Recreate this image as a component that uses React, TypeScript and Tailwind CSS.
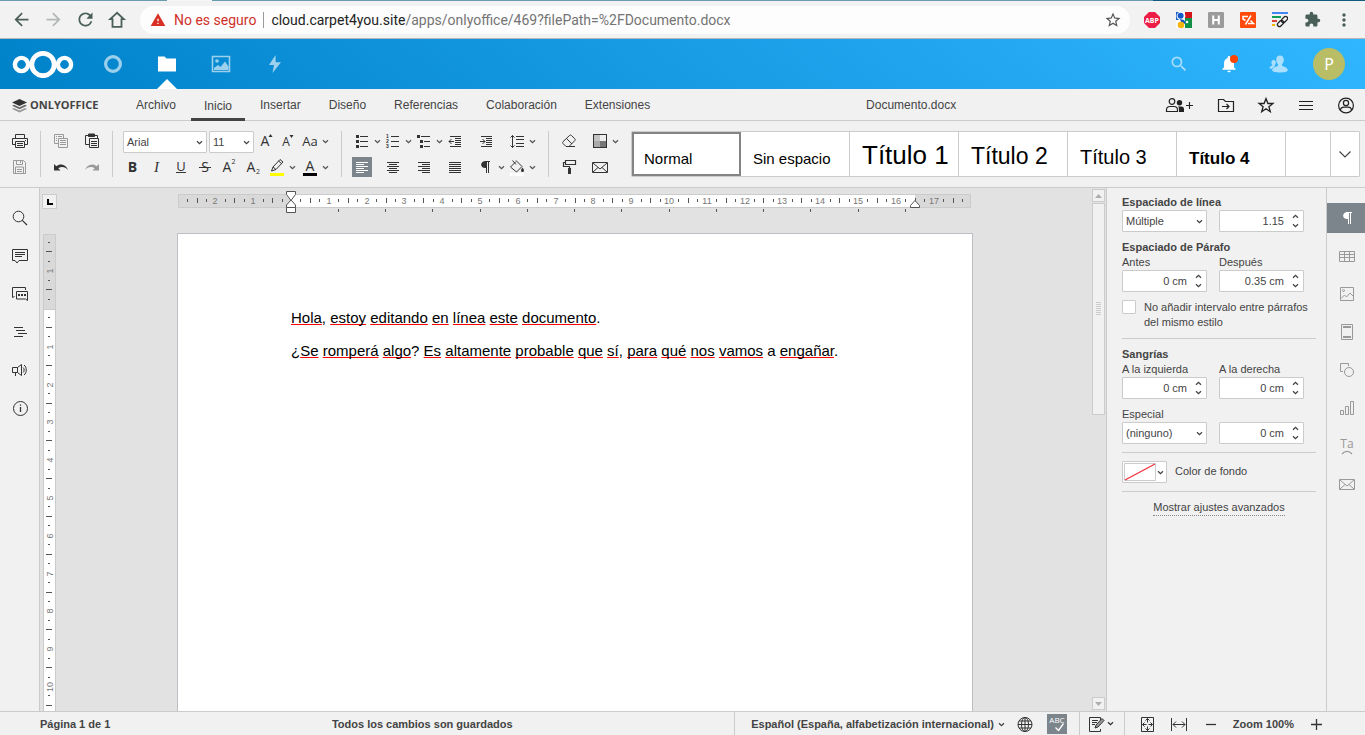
import { ComponentProps, FC, ReactNode, useState } from 'react';
import {
    MdArrowBack,
    MdArrowForward,
    MdExtension,
    MdMoreVert,
    MdNotifications,
    MdRefresh,
    MdSearch,
    MdStarBorder,
    MdWarning,
} from 'react-icons/md';
import { twJoin, twMerge } from 'tailwind-merge';

const CM = 37.8;

type IconProps = { children: ReactNode; size?: number; className?: string };

const Icon: FC<IconProps> = ({ children, size = 20, className }) => (
    <svg
        aria-hidden="true"
        className={twMerge('shrink-0', className)}
        fill="none"
        height={size}
        stroke="currentColor"
        viewBox={`0 0 ${size} ${size}`}
        width={size}
    >
        {children}
    </svg>
);

type GlyphProps = { x: number; y: number; size: number; children: string; bold?: boolean; italic?: boolean };

const Glyph: FC<GlyphProps> = ({ x, y, size, children, bold, italic }) => (
    <text
        fill="currentColor"
        fontFamily={italic ? 'Liberation Serif, serif' : 'Open Sans, sans-serif'}
        fontSize={size}
        fontStyle={italic ? 'italic' : 'normal'}
        fontWeight={bold ? 700 : 400}
        stroke="none"
        textAnchor="middle"
        x={x}
        y={y}
    >
        {children}
    </text>
);

const Caret: FC<{ className?: string }> = ({ className }) => (
    <svg
        aria-hidden="true"
        className={twMerge('h-[7px] w-[7px] shrink-0', className)}
        fill="none"
        stroke="currentColor"
        strokeWidth="1.3"
        viewBox="0 0 7 7"
    >
        <path d="M1 2.2l2.5 2.5L6 2.2" />
    </svg>
);

type ToolButtonProps = ComponentProps<'button'> & { label: string; caret?: boolean; active?: boolean };

const ToolButton: FC<ToolButtonProps> = ({ label, caret, active, className, children, ...props }) => (
    <button
        aria-label={label}
        type="button"
        className={twMerge(
            'flex h-5 shrink-0 items-center text-[#333]',
            caret ? 'w-[31px] gap-0.5' : 'w-5',
            active && 'bg-[#7d858c] text-white',
            className,
        )}
        {...props}
    >
        {children}
        {caret && <Caret className="text-[#555]" />}
    </button>
);

const Divider = () => <div className="h-[46px] w-px shrink-0 bg-[#cbcbcb]" />;

/* Browser chrome */

const BrowserBar = () => (
    <header className="shrink-0 font-[Roboto,sans-serif]">
        <div className="flex h-px bg-[#6a9bb0]">
            <div className="ml-[167px] w-[45px] bg-[#f6f6f6]" />
            <div className="ml-auto w-[212px] bg-[#125c7e]" />
        </div>
        <div className="flex h-[38px] items-center border-b border-[#b6b6b6] bg-[#f2f2f2] px-[5px] text-[#4a5f58]">
            <button aria-label="Atrás" className="flex w-8 justify-center" type="button">
                <MdArrowBack size={21} />
            </button>
            <button aria-label="Adelante" className="flex w-8 justify-center text-[#b1b8b5]" type="button">
                <MdArrowForward size={21} />
            </button>
            <button aria-label="Recargar" className="flex w-8 justify-center" type="button">
                <MdRefresh size={21} />
            </button>
            <button aria-label="Inicio" className="flex w-8 justify-center" type="button">
                <Icon>
                    <path d="M10 2.8L3.2 9.2H5.500v7.600h9V9.200h2.300z" strokeWidth="1.800" />
                </Icon>
            </button>
            <div className="mr-1.5 ml-[7px] flex h-7 flex-1 items-center rounded-full bg-[#fdfdfd] pr-2 pl-2.5 text-sm">
                <MdWarning className="mr-2 text-[#d93025]" size={16} />
                <span className="text-[#d0302a]">No es seguro</span>
                <span className="mx-[7px] h-4 w-px bg-[#9a9a9a]" />
                <div aria-label="Dirección" className="flex-1 truncate text-[#747474]" role="textbox" tabIndex={0}>
                    <span className="text-[#222]">cloud.carpet4you.site</span>
                    /apps/onlyoffice/469?filePath=%2FDocumento.docx
                </div>
                <button aria-label="Añadir a marcadores" className="text-[#555]" type="button">
                    <MdStarBorder size={18} />
                </button>
            </div>
            <ExtensionButton label="Bloqueador">
                <path d="M5 0h6l5 5v6l-5 5H5l-5-5V5z" fill="#ed1e45" stroke="none" />
                <g className="text-white">
                    <Glyph bold size={7} x={8} y={11}>
                        ABP
                    </Glyph>
                </g>
            </ExtensionButton>
            <ExtensionButton label="Buscador">
                <g stroke="none">
                    <path d="M0 0h16v16H0z" fill="#fff" />
                    <path d="M9 0h7v6H9z" fill="#d5151b" />
                    <path d="M9 6h7v10H9z" fill="#109246" />
                    <path d="M0 0h3v8H0z" fill="#1c5fc9" />
                    <circle cx="5" cy="4" fill="#fff" r="4.400" />
                    <circle cx="4.600" cy="3.800" fill="#1558c7" r="3" />
                    <path d="M4 7l4 1 2 3-2 1-3-2z" fill="#1558c7" />
                    <circle cx="5" cy="13" fill="#f5b50a" r="3.300" />
                    <circle cx="11" cy="10" fill="#fff" r="1.300" />
                </g>
            </ExtensionButton>
            <ExtensionButton label="Anotaciones">
                <rect fill="#9b9b9b" height="16" rx="1" stroke="none" width="16" />
                <path d="M5.200 3.500v9M10.800 3.500v9M5 8h6" stroke="#fff" strokeWidth="2" />
            </ExtensionButton>
            <ExtensionButton label="Etiquetas">
                <rect fill="#ff4a0c" height="16" rx="1" stroke="none" width="16" />
                <path d="M11 3.500L5.500 12.500M8 4.500H3v2.500l2.500 1.500M8 11.500h5.500L10.500 8.500" stroke="#fff" strokeWidth="1.500" />
            </ExtensionButton>
            <ExtensionButton label="Enlaces">
                <path d="M0 1h16" stroke="#4285f4" strokeWidth="2" />
                <path d="M0 5h9" stroke="#0f9d58" strokeWidth="2" />
                <path d="M0 9h5" stroke="#db4437" strokeWidth="2" />
                <path d="M0 13h3" stroke="#f4b400" strokeWidth="2" />
                <g stroke="#222" strokeWidth="1.300">
                    <rect height="4" rx="2" transform="rotate(-45 12.500 7.500)" width="7" x="9" y="5.500" />
                    <rect height="4" rx="2" transform="rotate(-45 8.500 11.500)" width="7" x="5" y="9.500" />
                </g>
            </ExtensionButton>
            <button aria-label="Extensiones" className="flex w-8 justify-center" type="button">
                <MdExtension size={17} />
            </button>
            <button aria-label="Menú" className="flex w-8 justify-center" type="button">
                <MdMoreVert size={20} />
            </button>
        </div>
    </header>
);

const ExtensionButton: FC<{ label: string; children: ReactNode }> = ({ label, children }) => (
    <button aria-label={label} className="flex w-8 justify-center" type="button">
        <Icon size={16}>{children}</Icon>
    </button>
);

/* Nextcloud header */

const CloudHeader = () => (
    <header className="flex h-[50px] shrink-0 items-center bg-[linear-gradient(40deg,#0082c9_0%,#30b6ff_100%)] pr-[11px] pl-3 text-white">
        <svg aria-label="Nextcloud" className="mr-3 h-7 w-[62px]" fill="none" role="img" stroke="#fff" viewBox="0 0 62 28">
            <circle cx="31" cy="14.500" r="11.200" strokeWidth="4.800" />
            <circle cx="9.500" cy="14.500" r="6.600" strokeWidth="4.400" />
            <circle cx="52.500" cy="14.500" r="6.600" strokeWidth="4.400" />
        </svg>
        <nav className="flex h-full">
            <a aria-label="Panel" className="flex w-[54px] items-center justify-center opacity-60" href="#panel">
                <Icon>
                    <circle cx="10" cy="10" r="7.400" strokeWidth="3.200" />
                </Icon>
            </a>
            <a aria-label="Archivos" className="relative flex w-[54px] items-center justify-center" href="#archivos">
                <Icon>
                    <path d="M1 2.500h6.500l2 2h9.500v13H1z" fill="currentColor" stroke="none" />
                </Icon>
                <svg aria-hidden="true" className="absolute bottom-0 h-2.5 w-5" viewBox="0 0 20 10">
                    <path d="M0 10L10 0l10 10z" fill="#fff" />
                </svg>
            </a>
            <a aria-label="Fotos" className="flex w-[54px] items-center justify-center opacity-60" href="#fotos">
                <Icon>
                    <path d="M1.500 2.500h17v15h-17z" strokeWidth="1.600" />
                    <circle cx="6" cy="7" fill="currentColor" r="1.800" stroke="none" />
                    <path d="M3 16v-2l4-3 2.500 2L14 7.500l3.500 5V16z" fill="currentColor" stroke="none" />
                </Icon>
            </a>
            <a aria-label="Actividad" className="flex w-[54px] items-center justify-center opacity-60" href="#actividad">
                <Icon>
                    <path d="M10.500 1L4 11h5L7.500 19 16 8.200h-5.300z" fill="currentColor" stroke="none" />
                </Icon>
            </a>
        </nav>
        <div className="ml-auto flex">
            <button aria-label="Buscar" className="flex w-[50px] items-center justify-center opacity-60" type="button">
                <MdSearch size={20} />
            </button>
            <button aria-label="Notificaciones" className="flex w-[50px] items-center justify-center" type="button">
                <span className="relative">
                    <MdNotifications size={20} />
                    <span className="absolute top-px right-px size-2 rounded-full bg-[#ff4402]" />
                </span>
            </button>
            <button aria-label="Contactos" className="flex w-[50px] items-center justify-center opacity-60" type="button">
                <Icon>
                    <g fill="currentColor" stroke="none">
                        <path d="M11 1.500c2.300 0 3.800 1.600 3.800 4.200 0 2-.8 3.600-1.800 4.400v1.600c1.500 1 5.800 1.600 5.800 4.600 0 1.500-3.600 2.200-7.800 2.200s-7.800-.7-7.800-2.200c0-3 4.300-3.600 5.800-4.600v-1.600c-1-.8-1.800-2.400-1.800-4.400 0-2.600 1.500-4.200 3.800-4.200z" />
                        <path d="M4.600 6c1.400 0 2.200 1 2.200 2.600 0 1.300-.5 2-1 2.600v1l-3 2.600H.8c-.6-2 1.200-2.600 2.600-3.500v-.6c-.6-.5-1-1.200-1-2.300C2.400 7 3.200 6 4.600 6z" />
                    </g>
                </Icon>
            </button>
            <button aria-label="Cuenta" className="flex w-[50px] items-center justify-center" type="button">
                <span className="flex size-8 items-center justify-center rounded-full bg-[#b8bd66] font-['Noto_Sans',sans-serif] text-base">
                    P
                </span>
            </button>
        </div>
    </header>
);

/* Menu tabs */

const TABS = ['Archivo', 'Inicio', 'Insertar', 'Diseño', 'Referencias', 'Colaboración', 'Extensiones'];

const MenuTabs = () => {
    const [activeTab, setActiveTab] = useState('Inicio');

    return (
        <div className="flex h-8 shrink-0 items-stretch border-b border-[#cbcbcb] text-xs text-[#444]">
            <div className="flex w-[123px] items-center pt-0.5 pl-3 font-['Open_Sans',sans-serif] text-[11px] font-bold">
                <svg aria-hidden="true" className="mr-[3px] h-4 w-[15px]" viewBox="0 0 15 16">
                    <path d="M0 11l2-1 5.500 2.500L13 10l2 1-7.500 3.500z" fill="#999" />
                    <path d="M0 7.800l2-1 5.500 2.500L13 6.800l2 1-7.500 3.500z" fill="#6a6a6a" />
                    <path d="M0 4.500L7.500 1 15 4.500 7.500 8z" fill="#333" />
                </svg>
                ONLYOFFICE
            </div>
            <nav className="flex gap-0.5">
                {TABS.map((tab) => (
                    <button
                        key={tab}
                        type="button"
                        className={twJoin(
                            'border-b-3 px-[13px] pt-[5px]',
                            tab === activeTab ? '-mb-px border-[#444]' : 'border-transparent pb-px',
                        )}
                        onClick={() => setActiveTab(tab)}
                    >
                        {tab}
                    </button>
                ))}
            </nav>
            <h1 className="flex flex-1 items-center justify-center pt-px pl-1.5">Documento.docx</h1>
            <div className="flex text-[#222]">
                <button aria-label="Compartir" className="flex w-[52px] items-center justify-center" type="button">
                    <svg aria-hidden="true" className="h-4 w-7" fill="none" stroke="currentColor" viewBox="0 0 28 16">
                        <circle cx="7" cy="4.500" r="2.800" strokeWidth="1.200" />
                        <path d="M1.500 14.500v-1.800c0-2 1.500-3.200 3.500-3.200h4c2 0 3.500 1.200 3.500 3.200v1.800z" strokeWidth="1.200" />
                        <circle cx="14.500" cy="5.700" fill="currentColor" r="2.700" stroke="none" />
                        <path d="M13 9.500h3.500c1.500 0 2.500 1 2.500 2.500v3h-5v-2.500c0-1.200-.4-2.200-1-3z" fill="currentColor" stroke="none" />
                        <path d="M24.500 5v7M21 8.500h7" strokeWidth="1.100" />
                    </svg>
                </button>
                <button aria-label="Abrir ubicación" className="flex w-10 items-center justify-center" type="button">
                    <Icon>
                        <path d="M3.500 4.500h5l2 2h8v10h-15zM7 11.500h7M11.500 9l2.500 2.500-2.500 2.500" strokeWidth="1.200" />
                    </Icon>
                </button>
                <button aria-label="Marcar como favorito" className="flex w-10 items-center justify-center" type="button">
                    <Icon>
                        <path d="M11 3.500l1.900 5h5l-4 3.200 1.400 5-4.300-3-4.300 3 1.400-5-4-3.200h5z" strokeWidth="1.300" />
                    </Icon>
                </button>
                <button aria-label="Ajustes de visualización" className="flex w-10 items-center justify-center" type="button">
                    <Icon>
                        <path d="M4 6.500h14M4 10.500h14M4 14.500h14" strokeWidth="1.200" />
                    </Icon>
                </button>
                <button aria-label="Usuario" className="flex w-10 items-center justify-center" type="button">
                    <Icon>
                        <circle cx="11" cy="10.500" r="7.400" strokeWidth="1.200" />
                        <circle cx="11" cy="8" r="2.600" strokeWidth="1.200" />
                        <path d="M5.500 15.500c0-2 1.500-3.300 3.500-3.300h4c2 0 3.500 1.300 3.500 3.300" strokeWidth="1.200" />
                    </Icon>
                </button>
            </div>
        </div>
    );
};

/* Toolbar */

type SelectBoxProps = { label: string; options: string[]; className?: string };

const SelectBox: FC<SelectBoxProps> = ({ label, options, className }) => (
    <div className={twMerge('relative h-[22px] shrink-0 text-[11px] text-[#444]', className)}>
        <select
            aria-label={label}
            className="size-full appearance-none rounded-[1px] border border-[#cbcbcb] bg-white pl-[3px]"
            defaultValue={options[0]}
        >
            {options.map((option) => (
                <option key={option}>{option}</option>
            ))}
        </select>
        <Caret className="pointer-events-none absolute top-2 right-1" />
    </div>
);

const HistoryTools = () => (
    <>
        <div className="flex w-5 flex-col gap-1.5">
            <ToolButton label="Imprimir">
                <Icon>
                    <path d="M5.500 7V3.500h9V7M5 13.500H2.500v-6h15v6H15M5.500 10.500h9v6h-9zM7 12.500h6M7 14.500h6M15 9.500h1" />
                </Icon>
            </ToolButton>
            <ToolButton className="text-[#999]" label="Guardar">
                <Icon>
                    <path d="M3.500 3.500h10l2 2v11h-12zM6.500 3.500v4h6v-4M10.500 4v2M5.500 16v-6h8v6M7 12.500h5M7 14.500h5" />
                </Icon>
            </ToolButton>
        </div>
        <Divider />
        <div className="grid grid-cols-2 gap-x-[11px] gap-y-1.5">
            <ToolButton className="text-[#999]" label="Copiar">
                <Icon>
                    <path d="M7 12.500H3.500v-9h9V7M5 5.500h1M7 5.500h4M5 7.500h1M5 9.500h1M7.500 7.500h9v9h-9zM9 9.500h6M9 11.500h6M9 13.500h6" />
                </Icon>
            </ToolButton>
            <ToolButton label="Pegar">
                <Icon>
                    <path d="M7 13.500H3.500v-9h12V7M7.500 7.500h9v9h-9zM9 10.500h6M9 12.500h6M9 14.500h6" />
                    <path d="M6.500 3h6v2.500h-6z" fill="currentColor" />
                </Icon>
            </ToolButton>
            <ToolButton label="Deshacer">
                <Icon>
                    <path d="M3 7v6.500h6.500L7.300 11.200c3-2.200 7.200-1.500 9.700 1.800C15.300 7.800 9.500 5.700 5.300 9.200z" fill="currentColor" stroke="none" />
                </Icon>
            </ToolButton>
            <ToolButton className="text-[#999]" label="Rehacer">
                <Icon>
                    <path d="M17 7v6.500h-6.500l2.200-2.300c-3-2.200-7.200-1.500-9.700 1.800C4.700 7.800 10.500 5.700 14.700 9.200z" fill="currentColor" stroke="none" />
                </Icon>
            </ToolButton>
        </div>
    </>
);

const FontTools = () => (
    <div className="flex w-[208px] shrink-0 flex-col gap-1">
        <div className="flex h-[22px] items-start">
            <SelectBox className="w-[84px]" label="Fuente" options={['Arial', 'Calibri', 'Courier New']} />
            <SelectBox className="ml-0.5 w-[45px]" label="Tamaño de fuente" options={['11', '12', '14']} />
            <ToolButton className="ml-0.5" label="Aumentar tamaño">
                <Icon>
                    <Glyph size={14} x={9} y={15}>
                        A
                    </Glyph>
                    <path d="M12.500 6h4l-2-3z" fill="currentColor" stroke="none" />
                </Icon>
            </ToolButton>
            <ToolButton className="ml-0.5" label="Reducir tamaño">
                <Icon>
                    <Glyph size={12} x={8} y={15}>
                        A
                    </Glyph>
                    <path d="M11.500 4h4l-2 3z" fill="currentColor" stroke="none" />
                </Icon>
            </ToolButton>
            <ToolButton caret className="ml-0.5" label="Cambiar mayúsculas">
                <Icon>
                    <Glyph size={13} x={10} y={15}>
                        Aa
                    </Glyph>
                </Icon>
            </ToolButton>
        </div>
        <div className="flex gap-1">
            <ToolButton label="Negrita">
                <Icon>
                    <Glyph bold size={14} x={9.5} y={15}>
                        B
                    </Glyph>
                </Icon>
            </ToolButton>
            <ToolButton label="Cursiva">
                <Icon>
                    <Glyph italic size={15} x={9.5} y={15}>
                        I
                    </Glyph>
                </Icon>
            </ToolButton>
            <ToolButton label="Subrayado">
                <Icon>
                    <Glyph size={13} x={10} y={14}>
                        U
                    </Glyph>
                    <path d="M5 15.500h10" />
                </Icon>
            </ToolButton>
            <ToolButton label="Tachado">
                <Icon>
                    <Glyph size={14} x={10} y={15}>
                        S
                    </Glyph>
                    <path d="M4 10.500h12" />
                </Icon>
            </ToolButton>
            <ToolButton label="Superíndice">
                <Icon>
                    <Glyph size={14} x={8} y={15}>
                        A
                    </Glyph>
                    <Glyph size={7} x={14.5} y={7}>
                        2
                    </Glyph>
                </Icon>
            </ToolButton>
            <ToolButton label="Subíndice">
                <Icon>
                    <Glyph size={14} x={8} y={15}>
                        A
                    </Glyph>
                    <Glyph size={7} x={15} y={17}>
                        2
                    </Glyph>
                </Icon>
            </ToolButton>
            <ToolButton caret label="Color de resaltado">
                <Icon>
                    <path d="M3 16h14v3H3z" fill="#ffff00" stroke="none" />
                    <path d="M4.500 14l1.500-4L13 2.500l3 2.500-7 7.500zM6 10l3 2.500M11.500 4l3 2.500" />
                </Icon>
            </ToolButton>
            <ToolButton caret className="-ml-0.5" label="Color de fuente">
                <Icon>
                    <Glyph size={14} x={10} y={14}>
                        A
                    </Glyph>
                    <path d="M3 16h14v3H3z" fill="#000" stroke="none" />
                </Icon>
            </ToolButton>
        </div>
    </div>
);

const ParagraphTools = () => {
    const [align, setAlign] = useState('left');

    return (
        <div className="grid shrink-0 grid-cols-[repeat(6,31px)] content-start gap-y-1.5">
            <ToolButton caret label="Viñetas">
                <Icon>
                    <path d="M8 5.500h8M8 10.500h8M8 15.500h8" />
                    <path d="M4 4h3v3H4zM4 9h3v3H4zM4 14h3v3H4z" fill="currentColor" stroke="none" />
                </Icon>
            </ToolButton>
            <ToolButton caret label="Numeración">
                <Icon>
                    <path d="M8 5.500h8M8 10.500h8M8 15.500h8" />
                    <g fill="currentColor" fontFamily="Liberation Sans, sans-serif" fontSize="5" fontWeight="700" stroke="none">
                        <text x="3" y="7">
                            1
                        </text>
                        <text x="3" y="12">
                            2
                        </text>
                        <text x="3" y="17">
                            3
                        </text>
                    </g>
                </Icon>
            </ToolButton>
            <ToolButton caret label="Lista multinivel">
                <Icon>
                    <path d="M7 5.500h9M10 10.500h6M10 15.500h6" />
                    <path d="M3 4h3v3H3zM6 9h3v3H6zM6 14h3v3H6z" fill="currentColor" stroke="none" />
                </Icon>
            </ToolButton>
            <ToolButton label="Reducir sangría">
                <Icon>
                    <path d="M5 5.500h11M10 7.500h6M10 9.500h6M10 11.500h6M10 13.500h6M5 15.500h11M9 10.500H4M6.500 8L4 10.500 6.500 13" />
                </Icon>
            </ToolButton>
            <ToolButton label="Aumentar sangría">
                <Icon>
                    <path d="M5 5.500h11M10 7.500h6M10 9.500h6M10 11.500h6M10 13.500h6M5 15.500h11M4 10.500h5M6.500 8L9 10.500 6.500 13" />
                </Icon>
            </ToolButton>
            <ToolButton caret label="Interlineado">
                <Icon>
                    <path d="M9 5.500h8M9 8.500h8M9 12.500h8M9 15.500h8M5.500 4.500v12M3.500 6.500l2-2 2 2M3.500 14.500l2 2 2-2" />
                </Icon>
            </ToolButton>
            <ToolButton active={align === 'left'} label="Alinear a la izquierda" onClick={() => setAlign('left')}>
                <Icon>
                    <path d="M4 5.500h12M4 7.500h8M4 9.500h12M4 11.500h8M4 13.500h12M4 15.500h8" />
                </Icon>
            </ToolButton>
            <ToolButton active={align === 'center'} label="Centrar" onClick={() => setAlign('center')}>
                <Icon>
                    <path d="M4 5.500h12M6 7.500h8M4 9.500h12M6 11.500h8M4 13.500h12M6 15.500h8" />
                </Icon>
            </ToolButton>
            <ToolButton active={align === 'right'} label="Alinear a la derecha" onClick={() => setAlign('right')}>
                <Icon>
                    <path d="M4 5.500h12M8 7.500h8M4 9.500h12M8 11.500h8M4 13.500h12M8 15.500h8" />
                </Icon>
            </ToolButton>
            <ToolButton active={align === 'justify'} label="Justificar" onClick={() => setAlign('justify')}>
                <Icon>
                    <path d="M4 5.500h12M4 7.500h12M4 9.500h12M4 11.500h12M4 13.500h12M4 15.500h12" />
                </Icon>
            </ToolButton>
            <ToolButton caret label="Caracteres no imprimibles">
                <Icon>
                    <path d="M9 4.500h5M10.500 4.500V16M12.500 4.500V16" />
                    <path d="M10 4v7C3.500 11.500 3.500 4 10 4z" fill="currentColor" stroke="none" />
                </Icon>
            </ToolButton>
            <ToolButton caret label="Sombreado">
                <Icon>
                    <path d="M3 16h14v3H3z" fill="#fff" stroke="none" />
                    <path d="M9 3.500l6 6-5.500 5.500-6-5L9 4.500M5.500 3.500l3.500 4" />
                    <path d="M15.500 10.500c1 1.500 1.500 2.200 1.500 3a1.500 1.500 0 01-3 0c0-.8.5-1.500 1.500-3z" fill="currentColor" stroke="none" />
                </Icon>
            </ToolButton>
        </div>
    );
};

const StyleTools = () => (
    <div className="grid shrink-0 grid-cols-[31px_31px] content-start gap-y-1.5">
        <ToolButton label="Borrar estilo">
            <Icon>
                <path d="M7 15.500l-3-3c-.6-.6-.6-1.200 0-1.800L10.500 4.500c.6-.6 1.400-.6 2 0l3.300 3.300c.6.6.6 1.200 0 1.800L10 15.500zM7.500 7.500l5.500 5.500M7 15.500h9" />
            </Icon>
        </ToolButton>
        <ToolButton caret label="Combinación de colores">
            <Icon>
                <path d="M3 3h14v14H3z" fill="#333" stroke="none" />
                <path d="M4 4h6v6H4z" fill="#c4c4c4" stroke="none" />
                <path d="M10 4h6v6h-6z" fill="#eee" stroke="none" />
                <path d="M4 10h6v6H4z" fill="#aaa" stroke="none" />
                <path d="M10 10h6v6h-6z" fill="#777" stroke="none" />
            </Icon>
        </ToolButton>
        <ToolButton label="Copiar estilo">
            <Icon>
                <path d="M6.500 3.500h10v4h-10zM6 5.500H4.500v4h6V12" strokeWidth="1.200" />
                <path d="M9 11h3v6H9z" fill="currentColor" stroke="none" />
            </Icon>
        </ToolButton>
        <ToolButton label="Combinar correspondencia">
            <Icon>
                <path d="M2.500 5.500h15v10h-15zM3 6l7 6 7-6M3 15l5-4.500M17 15l-5-4.500" />
            </Icon>
        </ToolButton>
    </div>
);

const STYLES = [
    { name: 'Normal', className: 'text-[15px]' },
    { name: 'Sin espacio', className: 'text-[15px]' },
    { name: 'Título 1', className: 'text-[26px]' },
    { name: 'Título 2', className: 'text-[23px]' },
    { name: 'Título 3', className: 'text-[20px]' },
    { name: 'Título 4', className: 'text-[17px] font-bold' },
];

const StyleGallery = () => {
    const [selected, setSelected] = useState('Normal');

    return (
        <div className="flex h-[46px] min-w-0 flex-1 rounded-[1px] border border-[#cbcbcb] bg-white text-black">
            <div className="flex flex-1 overflow-hidden">
                {STYLES.map(({ name, className }) => (
                    <button
                        key={name}
                        type="button"
                        className={twJoin(
                            'flex w-[109px] shrink-0 items-baseline border-r border-[#cbcbcb] pl-3 leading-none whitespace-nowrap before:h-8',
                            selected === name && 'outline-2 -outline-offset-2 outline-[#848484]',
                            className,
                        )}
                        onClick={() => setSelected(name)}
                    >
                        {name}
                    </button>
                ))}
            </div>
            <button
                aria-label="Más estilos"
                className="flex w-[29px] shrink-0 items-center justify-center border-l border-[#cbcbcb] text-[#444]"
                type="button"
            >
                <Icon size={14}>
                    <path d="M1.500 4.500L7 10l5.500-5.500" strokeWidth="1.200" />
                </Icon>
            </button>
        </div>
    );
};

const Toolbar = () => (
    <div className="flex h-[67px] shrink-0 items-start gap-2.5 border-b border-[#cbcbcb] pt-2.5 pr-[5px] pl-2.5">
        <HistoryTools />
        <Divider />
        <FontTools />
        <Divider />
        <ParagraphTools />
        <Divider />
        <StyleTools />
        <StyleGallery />
    </div>
);

/* Left panel */

const LEFT_TOOLS = [
    {
        label: 'Buscar',
        icon: (
            <>
                <circle cx="8.500" cy="8.500" r="5.300" />
                <path d="M12.300 12.300l4.700 4.700" strokeWidth="1.200" />
            </>
        ),
    },
    {
        label: 'Comentarios',
        icon: <path d="M2.500 3.500h15v11H9l-2 2.500-2-2.500H2.500zM5 6.500h10M5 8.500h10M5 10.500h7" />,
    },
    {
        label: 'Chat',
        icon: (
            <>
                <path d="M2.500 13.500v-10h13V6M2.500 13.500l2-1M6.500 7.500h11v9l-2-1.500h-9z" />
                <path d="M8 11h2M11 11h2M14 11h2" strokeWidth="2" />
            </>
        ),
    },
    { label: 'Navegación', icon: <path d="M4 5.500h9M6 8.500h9M8 11.500h9M4 14.500h9" /> },
    {
        label: 'Comentarios y soporte',
        icon: <path d="M2.500 7.500h5l4-3v11l-4-3h-5zM7.500 7.500v5M5.500 13v3M13 7.500c1.500 1 1.500 4 0 5M14 5c3 2 3 8 0 10" />,
    },
    {
        label: 'Acerca de',
        icon: (
            <>
                <circle cx="10.500" cy="10.500" r="7" />
                <path d="M10.500 9v5M10.500 6.500v1.200" strokeWidth="1.300" />
            </>
        ),
    },
];

const LeftPanel = () => (
    <nav className="flex w-10 shrink-0 flex-col items-center gap-2 border-r border-[#cbcbcb] pt-[15px] text-[#333]">
        {LEFT_TOOLS.map(({ label, icon }) => (
            <button key={label} aria-label={label} className="flex h-[30px] items-center" type="button">
                <Icon>{icon}</Icon>
            </button>
        ))}
    </nav>
);

/* Document area */

type RulerMark = { position: number; kind: 'number' | 'half' | 'quarter'; value: number };

// quarter-centimetre steps counted from the margin, the margin itself is left blank
const getRulerMarks = (from: number, to: number): RulerMark[] => {
    const marks: RulerMark[] = [];

    for (let step = from * 4; step <= to * 4; step++) {
        if (step === 0) {
            continue;
        }
        const position = Math.round((step / 4) * CM);
        const kind = step % 4 === 0 ? 'number' : step % 2 === 0 ? 'half' : 'quarter';
        marks.push({ position, kind, value: Math.abs(step / 4) });
    }

    return marks;
};

const HorizontalRuler = () => {
    const origin = 114;
    const tabStops = Array.from({ length: 13 }, (_, index) => Math.floor(origin + (index + 1) * 1.25 * CM));

    return (
        <svg aria-hidden="true" className="block h-[45px] w-[796px] shrink-0" viewBox="0 0 796 45">
            <path d="M1.500 6.500h792v13h-792z" fill="#d9d9d9" stroke="#cbcbcb" />
            <path d="M114 7h624v12H114z" fill="#fff" />
            {getRulerMarks(-2.75, 17.75).map(({ position, kind, value }) =>
                kind === 'number' ? (
                    <text
                        key={position}
                        fill="#777"
                        fontFamily="Liberation Sans, sans-serif"
                        fontSize="9"
                        textAnchor="middle"
                        x={origin + position}
                        y="16"
                    >
                        {value}
                    </text>
                ) : (
                    <rect
                        key={position}
                        fill="#555"
                        height={kind === 'half' ? 5 : 3}
                        width="1"
                        x={origin + position}
                        y={kind === 'half' ? 10 : 11}
                    />
                ),
            )}
            {tabStops.map((x) => (
                <rect key={x} fill="#555" height="3" width="1" x={x} y="21" />
            ))}
            <g fill="#fff" stroke="#555">
                <path d="M109.500 3.500h9v3l-4.500 6-4.500-6z" />
                <path d="M109.500 19.500v-2.500l4.500-5 4.500 5v2.500z" />
                <path d="M109.500 19.500h9v5h-9z" />
                <path d="M733.500 19.500v-2l4.500-5 4.500 5v2z" />
            </g>
        </svg>
    );
};

const VerticalRuler = () => {
    const origin = 75;
    // toolbars, the top margin and the status bar take this much of the window
    const lastVisible = Math.max(0, Math.floor((window.innerHeight - 343) / CM)) + 0.75;

    return (
        <div className="ml-[3px] flex-1 overflow-hidden">
            <svg aria-hidden="true" className="block h-[1123px] w-[13px]" viewBox="0 0 13 1123">
                <path d="M.5.5h12v1122H.5z" fill="#d9d9d9" stroke="#cbcbcb" />
                <path d="M1 76h11v971H1z" fill="#fff" />
                <path d="M1 75.500h11" stroke="#cbcbcb" />
                {getRulerMarks(-1.75, lastVisible).map(({ position, kind, value }) =>
                    kind === 'number' ? (
                        <text
                            key={position}
                            fill="#777"
                            fontFamily="Liberation Sans, sans-serif"
                            fontSize="9"
                            textAnchor="middle"
                            transform={`translate(10 ${origin + position}) rotate(-90)`}
                        >
                            {value}
                        </text>
                    ) : (
                        <rect
                            key={position}
                            fill="#555"
                            height="1"
                            width={kind === 'half' ? 6 : 2}
                            x={kind === 'half' ? 3 : 5}
                            y={origin + position - 1}
                        />
                    ),
                )}
            </svg>
        </div>
    );
};

// words between underscores are the ones the spell checker marks
const PARAGRAPHS = [
    '_Hola_, _estoy_ _editando_ _en_ _línea_ _este_ _documento_.',
    '¿_Se_ _romperá_ _algo_? _Es_ _altamente_ _probable_ _que_ _sí_, _para_ _qué_ _nos_ _vamos_ a _engañar_.',
];

const Page = () => (
    <article
        className="w-[796px] flex-1 border border-b-0 border-[#bbbec2] bg-white px-[113px] pt-[74px] text-[15px] leading-5 text-black"
        lang="es"
    >
        {PARAGRAPHS.map((paragraph) => (
            <p key={paragraph} className="mb-[13px]">
                {paragraph.split('_').map((part, index) =>
                    index % 2 === 1 ? (
                        <span
                            key={index}
                            className="underline decoration-[#f00] decoration-1 underline-offset-1 [text-decoration-skip-ink:none]"
                        >
                            {part}
                        </span>
                    ) : (
                        part
                    ),
                )}
            </p>
        ))}
    </article>
);

const ScrollButton: FC<{ label: string; path: string }> = ({ label, path }) => (
    <button
        aria-label={label}
        className="flex size-[13px] shrink-0 items-center justify-center border border-[#cbcbcb] bg-[#f1f1f1]"
        type="button"
    >
        <svg aria-hidden="true" className="h-1 w-[7px]" fill="#adadad" viewBox="0 0 7 4">
            <path d={path} />
        </svg>
    </button>
);

const ScrollBar = () => (
    <div className="flex w-3.5 shrink-0 flex-col gap-px py-px">
        <ScrollButton label="Desplazar arriba" path="M0 4l3.500-4L7 4z" />
        <div className="flex-1">
            <div className="flex h-[43%] w-[13px] flex-col items-center justify-center gap-px border border-[#cbcbcb] bg-[#f1f1f1]">
                {Array.from({ length: 7 }, (_, index) => (
                    <div key={index} className="h-px w-[5px] bg-[#cbcbcb]" />
                ))}
            </div>
        </div>
        <ScrollButton label="Desplazar abajo" path="M0 0l3.500 4L7 0z" />
    </div>
);

const Editor = () => (
    <main className="flex min-w-0 flex-1 overflow-hidden bg-[#e2e2e2]">
        <div className="flex w-[18px] shrink-0 flex-col pt-1.5">
            <button
                aria-label="Tipo de tabulador"
                className="mb-[25px] ml-0.5 flex size-[15px] shrink-0 items-center justify-center border border-[#cbcbcb] bg-[#f1f1f1]"
                type="button"
            >
                <span className="size-1.5 border-b-2 border-l-2 border-black" />
            </button>
            <VerticalRuler />
        </div>
        <div className="flex min-w-0 flex-1 flex-col items-center overflow-hidden">
            <HorizontalRuler />
            <Page />
        </div>
        <ScrollBar />
    </main>
);

/* Right panel */

type SpinnerProps = { id: string; value: string; label?: string };

const Spinner: FC<SpinnerProps> = ({ id, value, label }) => (
    <div className="relative h-[22px] w-[85px]">
        <input
            aria-label={label}
            className="size-full rounded-[1px] border border-[#cbcbcb] bg-white pr-[19px] text-right"
            defaultValue={value}
            id={id}
            type="text"
        />
        <div className="absolute inset-y-0.5 right-[5px] flex flex-col justify-between py-px">
            <button aria-label="Aumentar" type="button">
                <Caret className="rotate-180" />
            </button>
            <button aria-label="Disminuir" type="button">
                <Caret />
            </button>
        </div>
    </div>
);

const Rule = () => <hr className="border-[#cbcbcb]" />;

const ParagraphSettings = () => (
    <aside className="flex w-[220px] shrink-0 flex-col gap-2 border-l border-[#cbcbcb] pt-[7px] pr-2.5 pl-[15px] text-[11px] leading-[15px]">
        <section>
            <h2 className="font-bold">Espaciado de línea</h2>
            <div className="flex gap-3">
                <SelectBox className="w-[85px]" label="Espaciado de línea" options={['Múltiple', 'Exacto']} />
                <Spinner id="line-spacing" label="Valor del espaciado" value="1.15" />
            </div>
        </section>
        <section>
            <h2 className="font-bold">Espaciado de Párafo</h2>
            <div className="flex gap-3">
                <div>
                    <label className="block" htmlFor="before">
                        Antes
                    </label>
                    <Spinner id="before" value="0 cm" />
                </div>
                <div>
                    <label className="block" htmlFor="after">
                        Después
                    </label>
                    <Spinner id="after" value="0.35 cm" />
                </div>
            </div>
        </section>
        <label className="flex items-start gap-2">
            <input
                className="size-3.5 shrink-0 appearance-none rounded-[1px] border border-[#cbcbcb] bg-white checked:bg-[#7d858c]"
                type="checkbox"
            />
            No añadir intervalo entre párrafos del mismo estilo
        </label>
        <Rule />
        <section>
            <h2 className="font-bold">Sangrías</h2>
            <div className="flex gap-3">
                <div>
                    <label className="block" htmlFor="indent-left">
                        A la izquierda
                    </label>
                    <Spinner id="indent-left" value="0 cm" />
                </div>
                <div>
                    <label className="block" htmlFor="indent-right">
                        A la derecha
                    </label>
                    <Spinner id="indent-right" value="0 cm" />
                </div>
            </div>
        </section>
        <section>
            <h3>Especial</h3>
            <div className="flex gap-3">
                <SelectBox className="w-[85px]" label="Especial" options={['(ninguno)', 'Primera línea']} />
                <Spinner id="special" label="Valor especial" value="0 cm" />
            </div>
        </section>
        <Rule />
        <div className="flex gap-2">
            <button
                aria-label="Elegir color de fondo"
                className="flex h-[22px] w-[45px] items-center gap-px rounded-[1px] border border-[#cbcbcb] bg-white pl-px"
                type="button"
            >
                <svg aria-hidden="true" className="h-[18px] w-8" fill="none" viewBox="0 0 32 18">
                    <path d="M.5.5h31v17H.5z" stroke="#cbcbcb" />
                    <path d="M1 17L31 1" stroke="#f0323c" strokeWidth="1.300" />
                </svg>
                <Caret />
            </button>
            <span className="pt-[3px]">Color de fondo</span>
        </div>
        <Rule />
        <a className="self-center border-b border-dotted border-[#888]" href="#avanzados">
            Mostrar ajustes avanzados
        </a>
    </aside>
);

const SETTINGS_TABS = [
    {
        label: 'Párrafo',
        icon: (
            <>
                <path d="M9 4.500h6M11.500 4.500V16M13.500 4.500V16" />
                <path d="M11 4v7C4.500 11.500 4.500 4 11 4z" fill="currentColor" stroke="none" />
            </>
        ),
    },
    { label: 'Tabla', icon: <path d="M2.500 5.500h15v10h-15zM2.500 8.500h15M2.500 11.500h15M7.500 5.500v10M12.500 5.500v10" /> },
    {
        label: 'Imagen',
        icon: (
            <>
                <path d="M3.500 3.500h13v13h-13zM4 14.500l3.500-3.500 2 2L13 9l3.500 3.500" />
                <circle cx="6.500" cy="6.500" r="1" />
            </>
        ),
    },
    {
        label: 'Encabezado y pie',
        icon: (
            <>
                <path d="M4.500 2.500h11v15h-11z" />
                <path d="M6 5h8M6 15h8" strokeWidth="2" />
            </>
        ),
    },
    {
        label: 'Forma',
        icon: (
            <>
                <path d="M6 11.500H3.500v-8h8V6" />
                <circle cx="12" cy="12" r="4.500" />
            </>
        ),
    },
    { label: 'Gráfico', icon: <path d="M3.500 12.500h3v4h-3zM8.500 8.500h3v8h-3zM13.500 3.500h3v13h-3z" /> },
    {
        label: 'Texto artístico',
        icon: (
            <>
                <Glyph size={12} x={10} y={12}>
                    Ta
                </Glyph>
                <path d="M5 18c3-3.500 7-3.500 10 0" strokeWidth="1.200" />
            </>
        ),
    },
    { label: 'Correspondencia', icon: <path d="M2.500 5.500h15v10h-15zM3 6l7 6 7-6M3 15l5-4.500M17 15l-5-4.500" /> },
];

const SettingsTabs = () => (
    <nav className="flex w-[39px] shrink-0 flex-col gap-2 border-l border-[#cbcbcb] pt-[15px]">
        {SETTINGS_TABS.map(({ label, icon }, index) => (
            <button
                key={label}
                aria-label={label}
                type="button"
                className={twJoin(
                    'flex h-[30px] items-center justify-center pl-px',
                    index === 0 ? 'bg-[#7d858c] text-white' : 'text-[#999]',
                )}
            >
                <Icon>{icon}</Icon>
            </button>
        ))}
    </nav>
);

/* Status bar */

const StatusBar = () => (
    <footer className="flex h-6 shrink-0 items-stretch border-t border-[#cbcbcb] pl-10 text-[11px] font-bold">
        <div className="flex items-center pt-0.5">Página 1 de 1</div>
        <div className="flex flex-1 items-center justify-center pt-0.5">Todos los cambios son guardados</div>
        <div className="flex items-center gap-3 border-l border-[#cbcbcb] pr-3 pl-4">
            <button className="flex items-center gap-1 pt-0.5" type="button">
                Español (España, alfabetización internacional)
                <Caret />
            </button>
            <button aria-label="Idioma del documento" className="-ml-0.5 text-[#333]" type="button">
                <Icon>
                    <circle cx="10" cy="10.500" r="7" />
                    <ellipse cx="10" cy="10.500" rx="3.500" ry="7" />
                    <path d="M10 3.500v14M3 10.500h14M4 7h12M4 14h12" />
                </Icon>
            </button>
            <button aria-label="Revisión ortográfica" className="bg-[#7d858c] text-white" type="button">
                <Icon>
                    <Glyph size={8} x={10} y={9}>
                        ABC
                    </Glyph>
                    <path d="M8.500 13.500l3 3 5-7" strokeWidth="1.300" />
                </Icon>
            </button>
        </div>
        <div className="flex items-center border-l border-[#cbcbcb] pr-2.5 pl-[7px] text-[#333]">
            <button aria-label="Control de cambios" className="flex items-center" type="button">
                <Icon>
                    <path d="M13.500 6V3.500h-11v14h11V15M5 6.500h6M5 8.500h5M5 10.500h3" />
                    <path d="M8 14l1-3 6-6.500 2 2-6 6.500z" fill="#999" />
                </Icon>
                <Caret />
            </button>
        </div>
        <div className="flex items-center gap-3 border-l border-[#cbcbcb] pr-[39px] pl-3 text-[#333]">
            <button aria-label="Ajustar a la página" type="button">
                <Icon>
                    <path d="M4.500 3.500h12v14h-12zM10.500 4.500v4M10.500 12.500v4M5.500 10.500h4M11.500 10.500h4M8.500 6.500l2-2 2 2M8.500 14.500l2 2 2-2M7.500 8.500l-2 2 2 2M13.500 8.500l2 2-2 2" />
                </Icon>
            </button>
            <button aria-label="Ajustar al ancho" type="button">
                <Icon>
                    <path d="M2.500 4v13M17.500 4v13M4 10.500h12M7 7.500l-3 3 3 3M13 7.500l3 3-3 3" />
                </Icon>
            </button>
            <button aria-label="Alejar" type="button">
                <Icon>
                    <path d="M5 10.500h10" strokeWidth="1.300" />
                </Icon>
            </button>
            <span className="pt-0.5 text-[#444]">Zoom 100%</span>
            <button aria-label="Acercar" type="button">
                <Icon>
                    <path d="M5 10.500h11M10.500 5v11" strokeWidth="1.300" />
                </Icon>
            </button>
        </div>
    </footer>
);

const App = () => (
    <div className="flex h-screen flex-col overflow-hidden bg-[#f1f1f1] font-['Liberation_Sans',Arial,sans-serif] text-[#444]">
        <BrowserBar />
        <CloudHeader />
        <MenuTabs />
        <Toolbar />
        <div className="flex min-h-0 flex-1">
            <LeftPanel />
            <Editor />
            <ParagraphSettings />
            <SettingsTabs />
        </div>
        <StatusBar />
    </div>
);

export default App;
